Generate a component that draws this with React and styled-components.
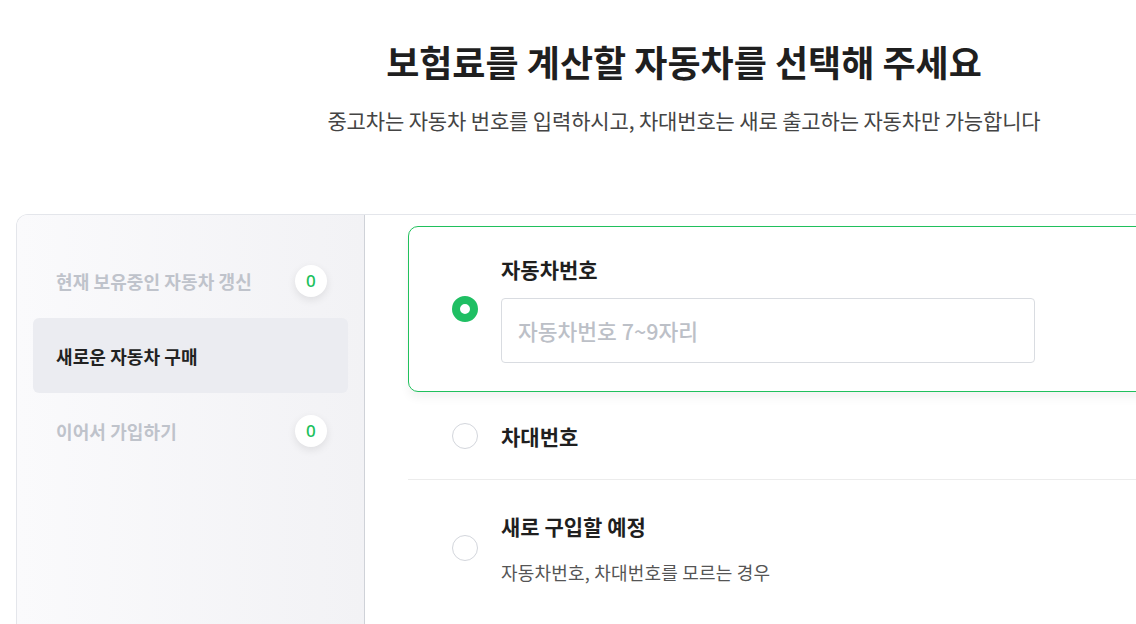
import React, { useState } from "react";
import styled, { createGlobalStyle } from "styled-components";

const GlobalStyle = createGlobalStyle`
  html, body {
    margin: 0;
    padding: 0;
    background: #fff;
    overflow: hidden;
  }
  body {
    font-family: "Noto Sans CJK KR", "Noto Sans", sans-serif;
    color: #222;
  }
  * { box-sizing: border-box; }
`;

export default function App() {
  const [selected, setSelected] = useState("plate");
  const menu = [
    { label: "현재 보유중인 자동차 갱신", count: 0 },
    { label: "새로운 자동차 구매", active: true },
    { label: "이어서 가입하기", count: 0 },
  ];
  return (
    <Page>
      <GlobalStyle />
      <Header>
        <Title>보험료를 계산할 자동차를 선택해 주세요</Title>
        <Subtitle>
          중고차는 자동차 번호를 입력하시고, 차대번호는 새로 출고하는 자동차만 가능합니다
        </Subtitle>
      </Header>
      <Panel>
        <Sidebar>
          {menu.map(({ label, count, active }) => (
            <MenuItem key={label} $active={active}>
              <span>{label}</span>
              {count !== undefined && <Badge>{count}</Badge>}
            </MenuItem>
          ))}
        </Sidebar>
        <Content>
          <OptionCard $selected={selected === "plate"} onClick={() => setSelected("plate")}>
            <Radio $checked={selected === "plate"} />
            <OptionBody>
              <OptionTitle>자동차번호</OptionTitle>
              <PlateInput placeholder="자동차번호 7~9자리" />
            </OptionBody>
          </OptionCard>
          <OptionRow $divider onClick={() => setSelected("vin")}>
            <Radio $checked={selected === "vin"} />
            <OptionBody>
              <OptionTitle>차대번호</OptionTitle>
            </OptionBody>
          </OptionRow>
          <OptionRow $tall onClick={() => setSelected("new")}>
            <Radio $checked={selected === "new"} />
            <OptionBody>
              <OptionTitle>새로 구입할 예정</OptionTitle>
              <OptionDesc>자동차번호, 차대번호를 모르는 경우</OptionDesc>
            </OptionBody>
          </OptionRow>
        </Content>
      </Panel>
    </Page>
  );
}

const Page = styled.div`
  width: 1368px;
  padding: 0 16px;
`;

const Header = styled.header`
  display: flex;
  flex-direction: column;
  align-items: center;
  padding-top: 35px;
  height: 214px;
`;

const Title = styled.h1`
  margin: 0;
  font-size: 36px;
  font-weight: 700;
  letter-spacing: 0;
  line-height: 52px;
  color: #1f1f1f;
`;

const Subtitle = styled.p`
  margin: 19px 0 0;
  font-size: 21px;
  font-weight: 400;
  letter-spacing: -0.15px;
  line-height: 28px;
  color: #444;
`;

const Panel = styled.section`
  display: flex;
  border: 1px solid #e4e6eb;
  border-bottom: none;
  border-radius: 12px 12px 0 0;
  height: 440px;
  overflow: hidden;
`;

const Sidebar = styled.nav`
  width: 348px;
  flex-shrink: 0;
  display: flex;
  flex-direction: column;
  padding: 28px 16px 0 16px;
  background: linear-gradient(90deg, #fafafc 0%, #f2f2f5 100%);
  border-right: 1px solid #cfd2d8;
`;

const MenuItem = styled.div`
  display: flex;
  align-items: center;
  justify-content: space-between;
  height: 75px;
  padding: 0 21px 0 23px;
  border-radius: 6px;
  background: ${(p) => (p.$active ? "#ebecf1" : "transparent")};
  color: ${(p) => (p.$active ? "#222" : "#bfc3cb")};
  font-size: 18px;
  font-weight: 700;
  letter-spacing: 0.1px;
`;

const Badge = styled.span`
  width: 32px;
  height: 32px;
  border-radius: 50%;
  background: #fff;
  box-shadow: 0 3px 9px rgba(0, 0, 0, 0.09);
  display: flex;
  align-items: center;
  justify-content: center;
  color: #20c05c;
  font-family: "Noto Sans", sans-serif;
  font-size: 17px;
  font-weight: 500;
`;

const Content = styled.div`
  flex: 1;
  padding: 11px 0 0 43px;
  display: flex;
  flex-direction: column;
`;

const OptionCard = styled.div`
  display: flex;
  align-items: center;
  height: 166px;
  padding: 0 43px;
  border: 1px solid #20c05c;
  border-radius: 10px;
  background: #fff;
  box-shadow: 0 6px 10px rgba(0, 0, 0, 0.05);
  cursor: pointer;
`;

const OptionRow = styled.div`
  display: flex;
  align-items: center;
  height: ${(p) => (p.$tall ? "136px" : "88px")};
  padding: 0 44px;
  border-bottom: ${(p) => (p.$divider ? "1px solid #ececec" : "none")};
  cursor: pointer;
`;

const Radio = styled.span`
  width: 26px;
  height: 26px;
  flex-shrink: 0;
  border-radius: 50%;
  border: ${(p) => (p.$checked ? "8.5px solid #1fbf63" : "1px solid #d3d6dc")};
  background: #fff;
  margin-right: 23px;
`;

const OptionBody = styled.div`
  display: flex;
  flex-direction: column;
`;

const OptionTitle = styled.div`
  font-size: 21px;
  font-weight: 700;
  letter-spacing: 0;
  color: #1f1f1f;
  line-height: 26px;
`;

const PlateInput = styled.input`
  margin-top: 16px;
  width: 534px;
  height: 65px;
  border: 1px solid #d9dce1;
  border-radius: 4px;
  padding: 0 16px;
  font-family: "Noto Sans CJK KR", sans-serif;
  font-size: 21.5px;
  font-weight: 500;
  letter-spacing: 0;
  outline: none;
  &::placeholder {
    color: #bcc0c7;
  }
`;

const OptionDesc = styled.div`
  margin-top: 22px;
  font-size: 18px;
  letter-spacing: 0.2px;
  color: #555;
  line-height: 22px;
`;
